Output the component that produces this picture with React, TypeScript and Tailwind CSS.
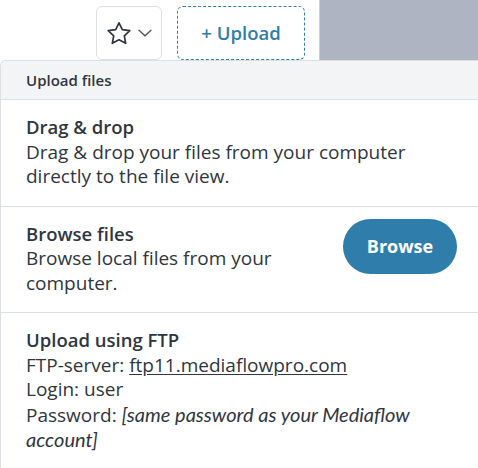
import React from 'react';

const font = { fontFamily: '"Open Sans", "Noto Sans", sans-serif' };
const italicFont = { fontFamily: 'Lato, "Open Sans", sans-serif' };

function StarIcon() {
  return (
    <svg width="26" height="24" viewBox="0 0 26 24" fill="none" stroke="#2f3640" strokeWidth="1.7" strokeLinejoin="round">
      <path d="M13 1.8l3.3 6.9 7.5 1-5.5 5.2 1.4 7.4L13 18.7l-6.7 3.6 1.4-7.4-5.5-5.2 7.5-1z" />
    </svg>
  );
}

function ChevronIcon() {
  return (
    <svg width="14" height="8" viewBox="0 0 14 8" fill="none" stroke="#4a525c" strokeWidth="1.3" strokeLinecap="round">
      <path d="M1 1.2l6 5.6 6-5.6" />
    </svg>
  );
}

export default function App() {
  return (
    <div className="w-[478px] h-[468px] bg-white overflow-hidden text-[#2f3640]" style={font}>
      <div className="flex h-[60px]">
        <button
          type="button"
          className="ml-[96px] mt-[6px] w-[66px] h-[54px] rounded-md border border-[#dcdfe3] flex items-center justify-center gap-[6px] bg-white"
        >
          <StarIcon />
          <ChevronIcon />
        </button>
        <button
          type="button"
          className="ml-[15px] mt-[6px] w-[128px] h-[54px] rounded-md border border-dashed border-[#2f7dab] text-[#2f7dab] text-[18.5px] font-semibold flex items-center justify-center"
        >
          + Upload
        </button>
        <div className="ml-auto w-[159px] h-[60px] bg-[#aeb4c1] border-l border-[#c9cdd5]" />
      </div>

      <div className="w-[490px] border-l border-t border-[#dcdfe3] rounded-tl-md bg-white">
        <div className="h-[39px] bg-[#f3f4f6] border-b border-[#dcdfe3] px-[25px] flex items-center text-[15px] font-semibold rounded-tl-md">
          Upload files
        </div>

        <div className="pl-[25px] pr-[45px] pt-[14px] pb-[17px] border-b border-[#dcdfe3] text-[19px] leading-[24.5px]">
          <p className="font-semibold text-[18.5px] leading-[25.5px]">Drag &amp; drop</p>
          <p>Drag &amp; drop your files from your computer directly to the file view.</p>
        </div>

        <div className="pl-[25px] pr-[33px] pt-[14px] pb-[17px] border-b border-[#dcdfe3] text-[19px] leading-[24.5px] flex items-start gap-[24px]">
          <div className="flex-1">
            <p className="font-semibold text-[18.5px] leading-[25.5px]">Browse files</p>
            <p>Browse local files from your computer.</p>
          </div>
          <button
            type="button"
            className="mt-[-2px] w-[114px] h-[55px] rounded-full bg-[#2f7dab] text-white text-[18px] font-bold shrink-0"
          >
            Browse
          </button>
        </div>

        <div className="pl-[25px] pr-[45px] pt-[14px] pb-[17px] text-[19px] leading-[24.5px]">
          <p className="font-semibold text-[18.5px] leading-[25.5px]">Upload using FTP</p>
          <p>
            FTP-server: <span className="underline underline-offset-2">ftp11.mediaflowpro.com</span>
          </p>
          <p>Login: user</p>
          <p>
            Password:{' '}
            <span className="italic font-normal text-[20px] leading-[24.5px]" style={italicFont}>
              [same password as your Mediaflow account]
            </span>
          </p>
        </div>
      </div>
    </div>
  );
}
